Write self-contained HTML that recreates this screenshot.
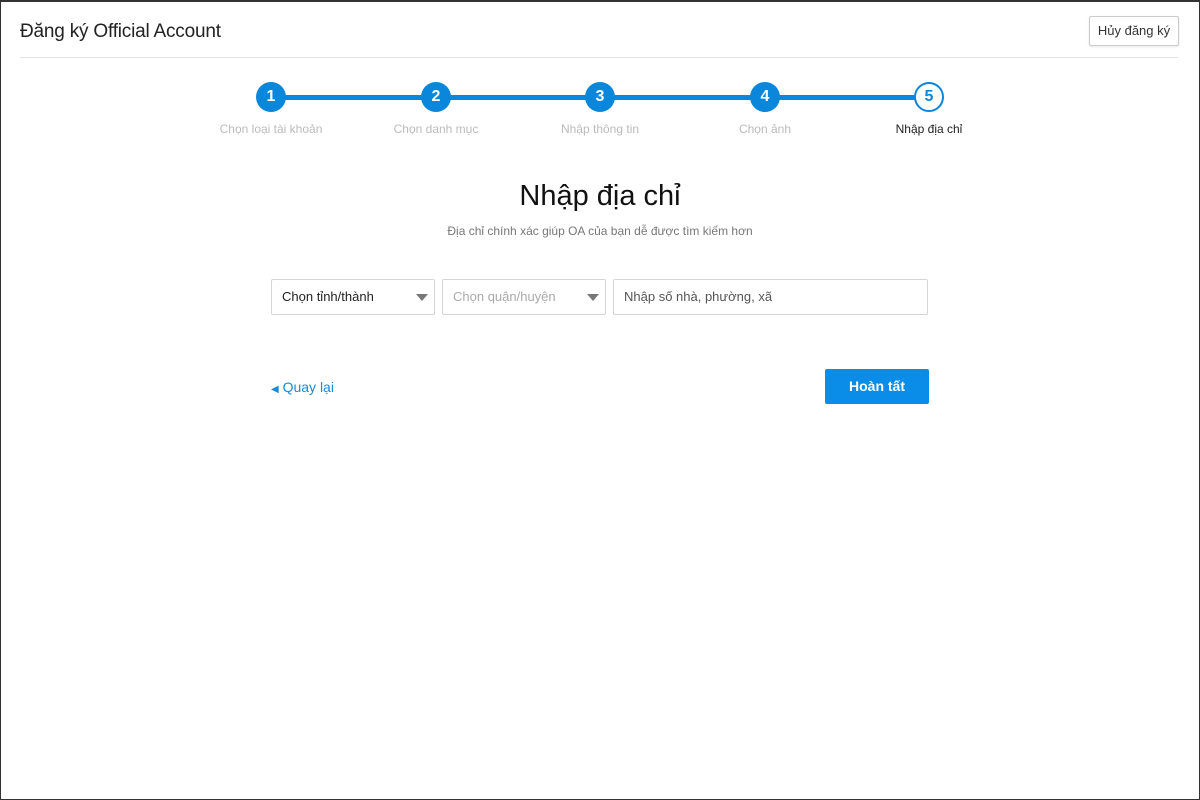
<!DOCTYPE html>
<html><head><meta charset="utf-8"><style>
*{box-sizing:border-box;margin:0;padding:0}
body{width:1200px;height:800px;background:#fff;font-family:"Liberation Sans",sans-serif;position:relative;overflow:hidden}
.frame{position:absolute;left:0;top:0;width:1200px;height:800px;border:1px solid #333;border-top:2px solid #333}
.abs{position:absolute}
.title{left:20px;top:21px;font-size:19px;color:#222;letter-spacing:-0.2px}
.hr{left:20px;top:57px;width:1158px;height:1px;background:#e3e3e3}
.cancel{left:1089px;top:16px;width:90px;height:30px;border:1px solid #ccc;border-radius:2px;font-size:13px;color:#333;text-align:center;line-height:28px;box-shadow:0 1px 2px rgba(0,0,0,.1)}
.line{top:95px;left:271px;width:658px;height:5px;background:#0a87db}
.c{width:30px;height:30px;border-radius:50%;background:#0a87db;color:#fff;font-weight:bold;font-size:16px;text-align:center;line-height:30px;top:82px}
.c5{background:#fff;border:2px solid #0a87db;color:#0a87db;line-height:26px}
.lbl{top:122px;width:160px;text-align:center;font-size:12px;color:#bbb}
h1{position:absolute;left:0;width:1200px;top:180px;text-align:center;font-weight:normal;font-size:29px;color:#111}
.sub{left:0;width:1200px;top:224px;text-align:center;font-size:12px;color:#777}
.sel{top:279px;height:36px;border:1px solid #d5d5d5;border-radius:2px;font-size:13px;line-height:34px;padding-left:10px;color:#222}
.arr{position:absolute;right:6px;top:14px;border-left:6px solid transparent;border-right:6px solid transparent;border-top:7px solid #777}
.back{left:271px;top:379px;font-size:14px;color:#1a8ad8}
.done{left:825px;top:369px;width:104px;height:35px;background:#0a8de8;border-radius:2px;color:#fff;font-weight:bold;font-size:14px;text-align:center;line-height:35px}
</style></head><body>
<div class="abs title">Đăng ký Official Account</div>
<div class="abs cancel">Hủy đăng ký</div>
<div class="abs hr"></div>
<div class="abs line"></div>
<div class="abs c" style="left:256px">1</div>
<div class="abs c" style="left:421px">2</div>
<div class="abs c" style="left:585px">3</div>
<div class="abs c" style="left:750px">4</div>
<div class="abs c c5" style="left:914px">5</div>
<div class="abs lbl" style="left:191px">Chọn loại tài khoản</div>
<div class="abs lbl" style="left:356px">Chọn danh mục</div>
<div class="abs lbl" style="left:520px">Nhập thông tin</div>
<div class="abs lbl" style="left:685px">Chọn ảnh</div>
<div class="abs lbl" style="left:849px;color:#222">Nhập địa chỉ</div>
<h1>Nhập địa chỉ</h1>
<div class="abs sub">Địa chỉ chính xác giúp OA của bạn dễ được tìm kiếm hơn</div>
<div class="abs sel" style="left:271px;width:164px">Chọn tỉnh/thành<span class="arr"></span></div>
<div class="abs sel" style="left:442px;width:164px;color:#aaa">Chọn quận/huyện<span class="arr"></span></div>
<div class="abs sel" style="left:613px;width:315px;color:#555">Nhập số nhà, phường, xã</div>
<div class="abs back"><span style="font-size:10px">◀</span> Quay lại</div>
<div class="abs done">Hoàn tất</div>
<div class="frame"></div>
</body></html>
